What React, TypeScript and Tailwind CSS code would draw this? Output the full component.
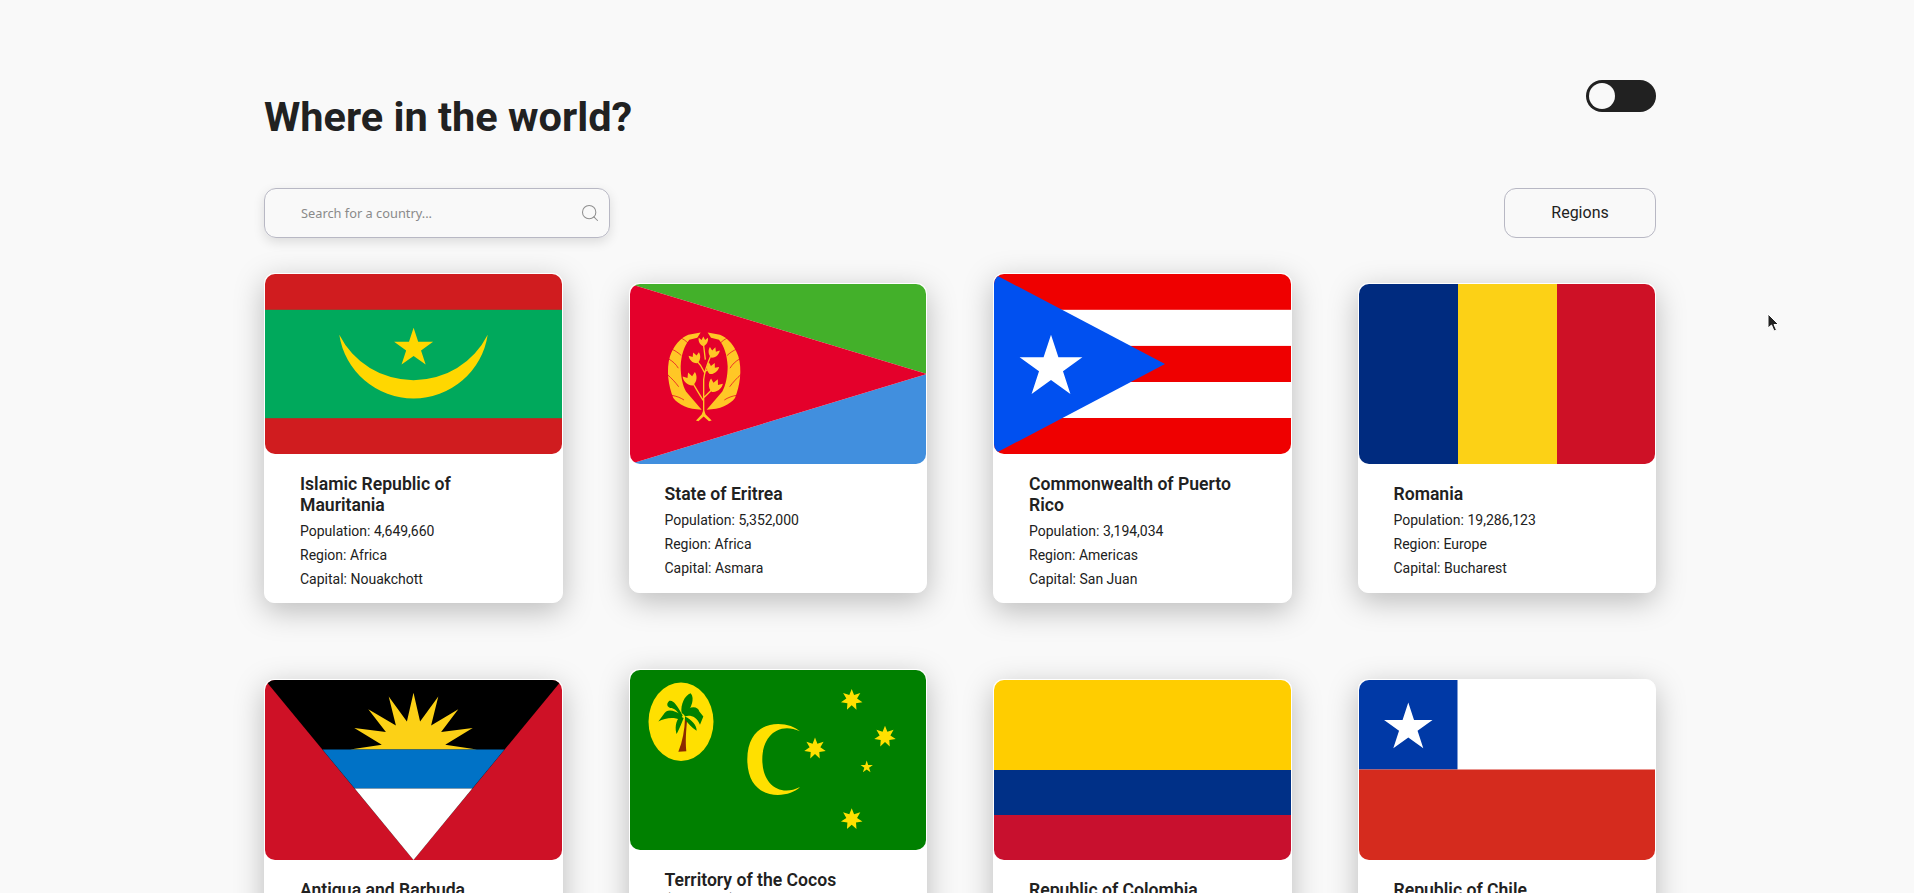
import React from "react";
import { Search } from "lucide-react";

const W = 297;
const H = 181;

function star(cx: number, cy: number, R: number, n = 5, ratio = 0.382) {
  const pts: string[] = [];
  for (let i = 0; i < n * 2; i++) {
    const r = i % 2 === 0 ? R : R * ratio;
    const a = (-90 + (i * 180) / n) * (Math.PI / 180);
    pts.push(`${(cx + r * Math.cos(a)).toFixed(2)},${(cy + r * Math.sin(a)).toFixed(2)}`);
  }
  return pts.join(" ");
}

const sunPoints =
  "85,70 116.8,65 89.3,48.3 120.9,52.3 103.3,29.3 130.9,45.7 123.7,16.7 141.9,41.7 148.5,12.7 155.1,41.7 173.3,16.7 166.1,45.7 193.3,29.3 176.1,52.3 207.7,48.3 180.2,65 212,70";

function Svg({ children }: { children: React.ReactNode }) {
  return (
    <svg viewBox={`0 0 ${W} ${H}`} width={W} height={180} preserveAspectRatio="none" className="block" shapeRendering="geometricPrecision">
      {children}
    </svg>
  );
}

const Mauritania = () => (
  <Svg>
    <rect width={W} height={H} fill="#d01c1f" />
    <rect y="36" width={W} height="109" fill="#00a95c" />
    <path d="M74.3 61A75 75 0 0 0 222.7 61A83 83 0 0 1 74.3 61Z" fill="#ffd700" />
    <polygon points={star(148.6, 74.5, 20.5)} fill="#ffd700" />
  </Svg>
);

const EmblemLeaf = ({ x, y, s = 1, r = 0 }: { x: number; y: number; s?: number; r?: number }) => (
  <path
    transform={`translate(${x} ${y}) rotate(${r}) scale(${s})`}
    d="M0 13C-12 9-15-4-13-11L-5-5L0-15L5-5L13-11C15-4 12 9 0 13Z"
    fill="#ffc726"
  />
);

const WreathSide = () => (
  <g>
    <path
      d="M125 241C85 241 55 226 40 206C25 170 18 120 30 80C40 50 60 25 85 15L122 8L112 24L88 30C72 50 64 75 62 110C62 140 68 168 78 186L125 241Z"
      fill="#ffc726"
    />
    <path d="M26 88C38 95 48 104 55 116M22 135C34 146 46 158 56 172M36 198C48 200 62 205 72 212M34 58C44 62 56 70 64 78M62 24C70 28 78 34 84 40" fill="none" stroke="#e4002b" strokeWidth="2.2" />
  </g>
);

const Eritrea = () => (
  <Svg>
    <polygon points="0,0 297,0 297,90.5" fill="#43b02a" />
    <polygon points="0,181 297,181 297,90.5" fill="#418fde" />
    <polygon points="0,0 297,90.5 0,181" fill="#e4002b" />
    <g transform="translate(30 46) scale(0.3333)">
      <WreathSide />
      <g transform="translate(265 0) scale(-1 1)">
        <WreathSide />
      </g>
      <path d="M131 258L131 150C135 115 148 90 155 72M131 215C118 195 105 172 95 155M131 205C145 192 155 182 163 172M134 130C125 110 115 98 107 90M136 125C145 120 150 118 155 115M136 90L130 40" fill="none" stroke="#ffc726" strokeWidth="4" />
      <path d="M108 274L125 256L131 240L137 256L155 274L147 276L131 262L115 276Z" fill="#ffc726" />
      <EmblemLeaf x={130} y={36} s={1.05} />
      <EmblemLeaf x={160} y={70} s={1.2} r={20} />
      <EmblemLeaf x={106} y={86} s={1.25} r={-20} />
      <EmblemLeaf x={156} y={118} s={1.3} r={25} />
      <EmblemLeaf x={92} y={150} s={1.5} r={-20} />
      <EmblemLeaf x={164} y={170} s={1.5} r={25} />
    </g>
  </Svg>
);

const PuertoRico = () => (
  <Svg>
    <rect width={W} height={H} fill="#ef0000" />
    <rect y="36" width={W} height="36.3" fill="#fff" />
    <rect y="108.6" width={W} height="36.2" fill="#fff" />
    <polygon points="0,0 171,90.5 0,181" fill="#0050f0" />
    <polygon points={star(57, 94, 33)} fill="#fff" />
  </Svg>
);

const Romania = () => (
  <Svg>
    <rect width="99" height={H} fill="#002b7f" />
    <rect x="99" width="99" height={H} fill="#fcd116" />
    <rect x="198" width="99" height={H} fill="#ce1126" />
  </Svg>
);

const Antigua = () => (
  <Svg>
    <rect width={W} height={H} fill="#ce1126" />
    <polygon points="0,0 297,0 148.5,181" fill="#000" />
    <polygon points={sunPoints} fill="#fcd116" />
    <polygon points="57.5,70 239.5,70 207.3,109 89.7,109" fill="#0072c6" />
    <polygon points="89.7,109 207.3,109 148.5,181" fill="#fff" />
  </Svg>
);

const Cocos = () => (
  <Svg>
    <rect width={W} height={H} fill="#008000" />
    <ellipse cx="51" cy="52" rx="32.5" ry="39.5" fill="#ffe000" />
    <g transform="translate(10 5) scale(0.3333)">
      <path d="M135 130L142 130C138 170 136 200 139 230L115 232C128 200 134 165 135 130Z" fill="#8b2a00" />
      <g fill="#008000">
        <path d="M125 115C120 90 135 60 152 55C165 70 155 100 135 122Z" />
        <path d="M128 122C110 90 100 75 88 78C75 90 85 100 95 100C110 105 115 115 125 128Z" />
        <path d="M125 120C100 105 80 100 70 120L55 140C75 130 100 125 120 135Z" />
        <path d="M130 115C150 90 175 95 178 110L190 125L180 150C170 125 150 120 135 125Z" />
        <path d="M122 125C105 135 105 165 110 178C120 160 125 145 131 130Z" />
        <path d="M135 125C155 135 170 150 170 168C155 160 145 145 135 135Z" />
      </g>
    </g>
    <path d="M170 61.7C158 50 117.3 47 117.3 90C117.3 133 158 130 170 117.7C150 128 132.3 115 132.3 90C132.3 65 150 52 170 61.7Z" fill="#ffe000" />
    <polygon points={star(221.7, 30, 11, 7, 0.5)} fill="#ffe000" />
    <polygon points={star(255, 67, 11, 7, 0.5)} fill="#ffe000" />
    <polygon points={star(185, 79, 11, 7, 0.5)} fill="#ffe000" />
    <polygon points={star(236.7, 97.5, 6.5, 5)} fill="#ffe000" />
    <polygon points={star(221.7, 150, 11, 7, 0.5)} fill="#ffe000" />
  </Svg>
);

const Colombia = () => (
  <Svg>
    <rect width={W} height="90.5" fill="#ffcd00" />
    <rect y="90.5" width={W} height="45.25" fill="#003087" />
    <rect y="135.75" width={W} height="45.25" fill="#c8102e" />
  </Svg>
);

const Chile = () => (
  <Svg>
    <rect width={W} height="90" fill="#fff" />
    <rect width="98.5" height="90" fill="#0039a6" />
    <rect y="90" width={W} height="91" fill="#d52b1e" />
    <polygon points={star(49.3, 48, 25.5)} fill="#fff" />
  </Svg>
);

type Country = { name: string; pop: string; region: string; capital: string; flag: React.ReactNode };

const countries: Country[] = [
  { name: "Islamic Republic of Mauritania", pop: "4,649,660", region: "Africa", capital: "Nouakchott", flag: <Mauritania /> },
  { name: "State of Eritrea", pop: "5,352,000", region: "Africa", capital: "Asmara", flag: <Eritrea /> },
  { name: "Commonwealth of Puerto Rico", pop: "3,194,034", region: "Americas", capital: "San Juan", flag: <PuertoRico /> },
  { name: "Romania", pop: "19,286,123", region: "Europe", capital: "Bucharest", flag: <Romania /> },
  { name: "Antigua and Barbuda", pop: "97,928", region: "Americas", capital: "Saint John's", flag: <Antigua /> },
  { name: "Territory of the Cocos (Keeling) Islands", pop: "544", region: "Oceania", capital: "West Island", flag: <Cocos /> },
  { name: "Republic of Colombia", pop: "50,882,884", region: "Americas", capital: "Bogotá", flag: <Colombia /> },
  { name: "Republic of Chile", pop: "19,116,209", region: "Americas", capital: "Santiago", flag: <Chile /> },
];

function Card({ c }: { c: Country }) {
  return (
    <article className="bg-white rounded-[10px] border border-white shadow-[0_8px_30px_rgba(0,0,0,0.25)] pb-[11.4px]">
      <div className="rounded-[10px] overflow-hidden h-[180px]">{c.flag}</div>
      <div className="pl-[35px] pr-[36px] pt-[20px]">
        <h2 className="text-[17.6px] leading-[20.8px] font-semibold text-[#212121] mb-[3px]">{c.name}</h2>
        <p className="text-[14px] leading-[24px] text-[#212121]">Population: {c.pop}</p>
        <p className="text-[14px] leading-[24px] text-[#212121]">Region: {c.region}</p>
        <p className="text-[14px] leading-[24px] text-[#212121]">Capital: {c.capital}</p>
      </div>
    </article>
  );
}

export default function App() {
  return (
    <div className="relative h-[893px] overflow-hidden bg-[#f9f9f9] pl-[264px] pr-[258px] pt-[80px] font-['Roboto',sans-serif]">
      <header className="flex justify-between items-start h-[108px]">
        <h1 className="text-[41.5px] leading-[74px] font-bold text-[#212121]">Where in the world?</h1>
        <div className="w-[70px] h-[32px] rounded-full bg-[#212121] flex items-center pl-[3px]">
          <div className="w-[26px] h-[26px] rounded-full bg-[#f9f9f9]" />
        </div>
      </header>

      <div className="flex justify-between items-center h-[50px] mb-[35px]">
        <div className="w-[346px] h-[50px] rounded-[12px] border border-[#b8b8c4] shadow-[0_4px_12px_rgba(0,0,0,0.12)] flex items-center pl-[36px] pr-[9px]">
          <input
            placeholder="Search for a country..."
            className="flex-1 min-w-0 pt-[2px] bg-transparent outline-none text-[12.8px] font-['Noto_Sans',sans-serif] placeholder:text-[#8a8a8a]"
          />
          <Search size={20} strokeWidth={1.25} color="#8f8f8f" />
        </div>
        <button className="w-[152px] h-[50px] rounded-[12px] border border-[#b8b8c4] text-[16px] text-[#212121]">Regions</button>
      </div>

      <main className="grid grid-cols-4 gap-x-[66px] gap-y-[66px] items-center">
        {countries.map((c) => (
          <Card key={c.name} c={c} />
        ))}
      </main>

      <svg className="absolute left-[1766px] top-[312px]" width="14" height="22" viewBox="0 0 14 22">
        <path d="M2 2L2 16L5.5 13L8 19L10.5 18L8 12.5L12.5 12.5Z" fill="#222" stroke="#fff" strokeWidth="1" />
      </svg>
    </div>
  );
}
